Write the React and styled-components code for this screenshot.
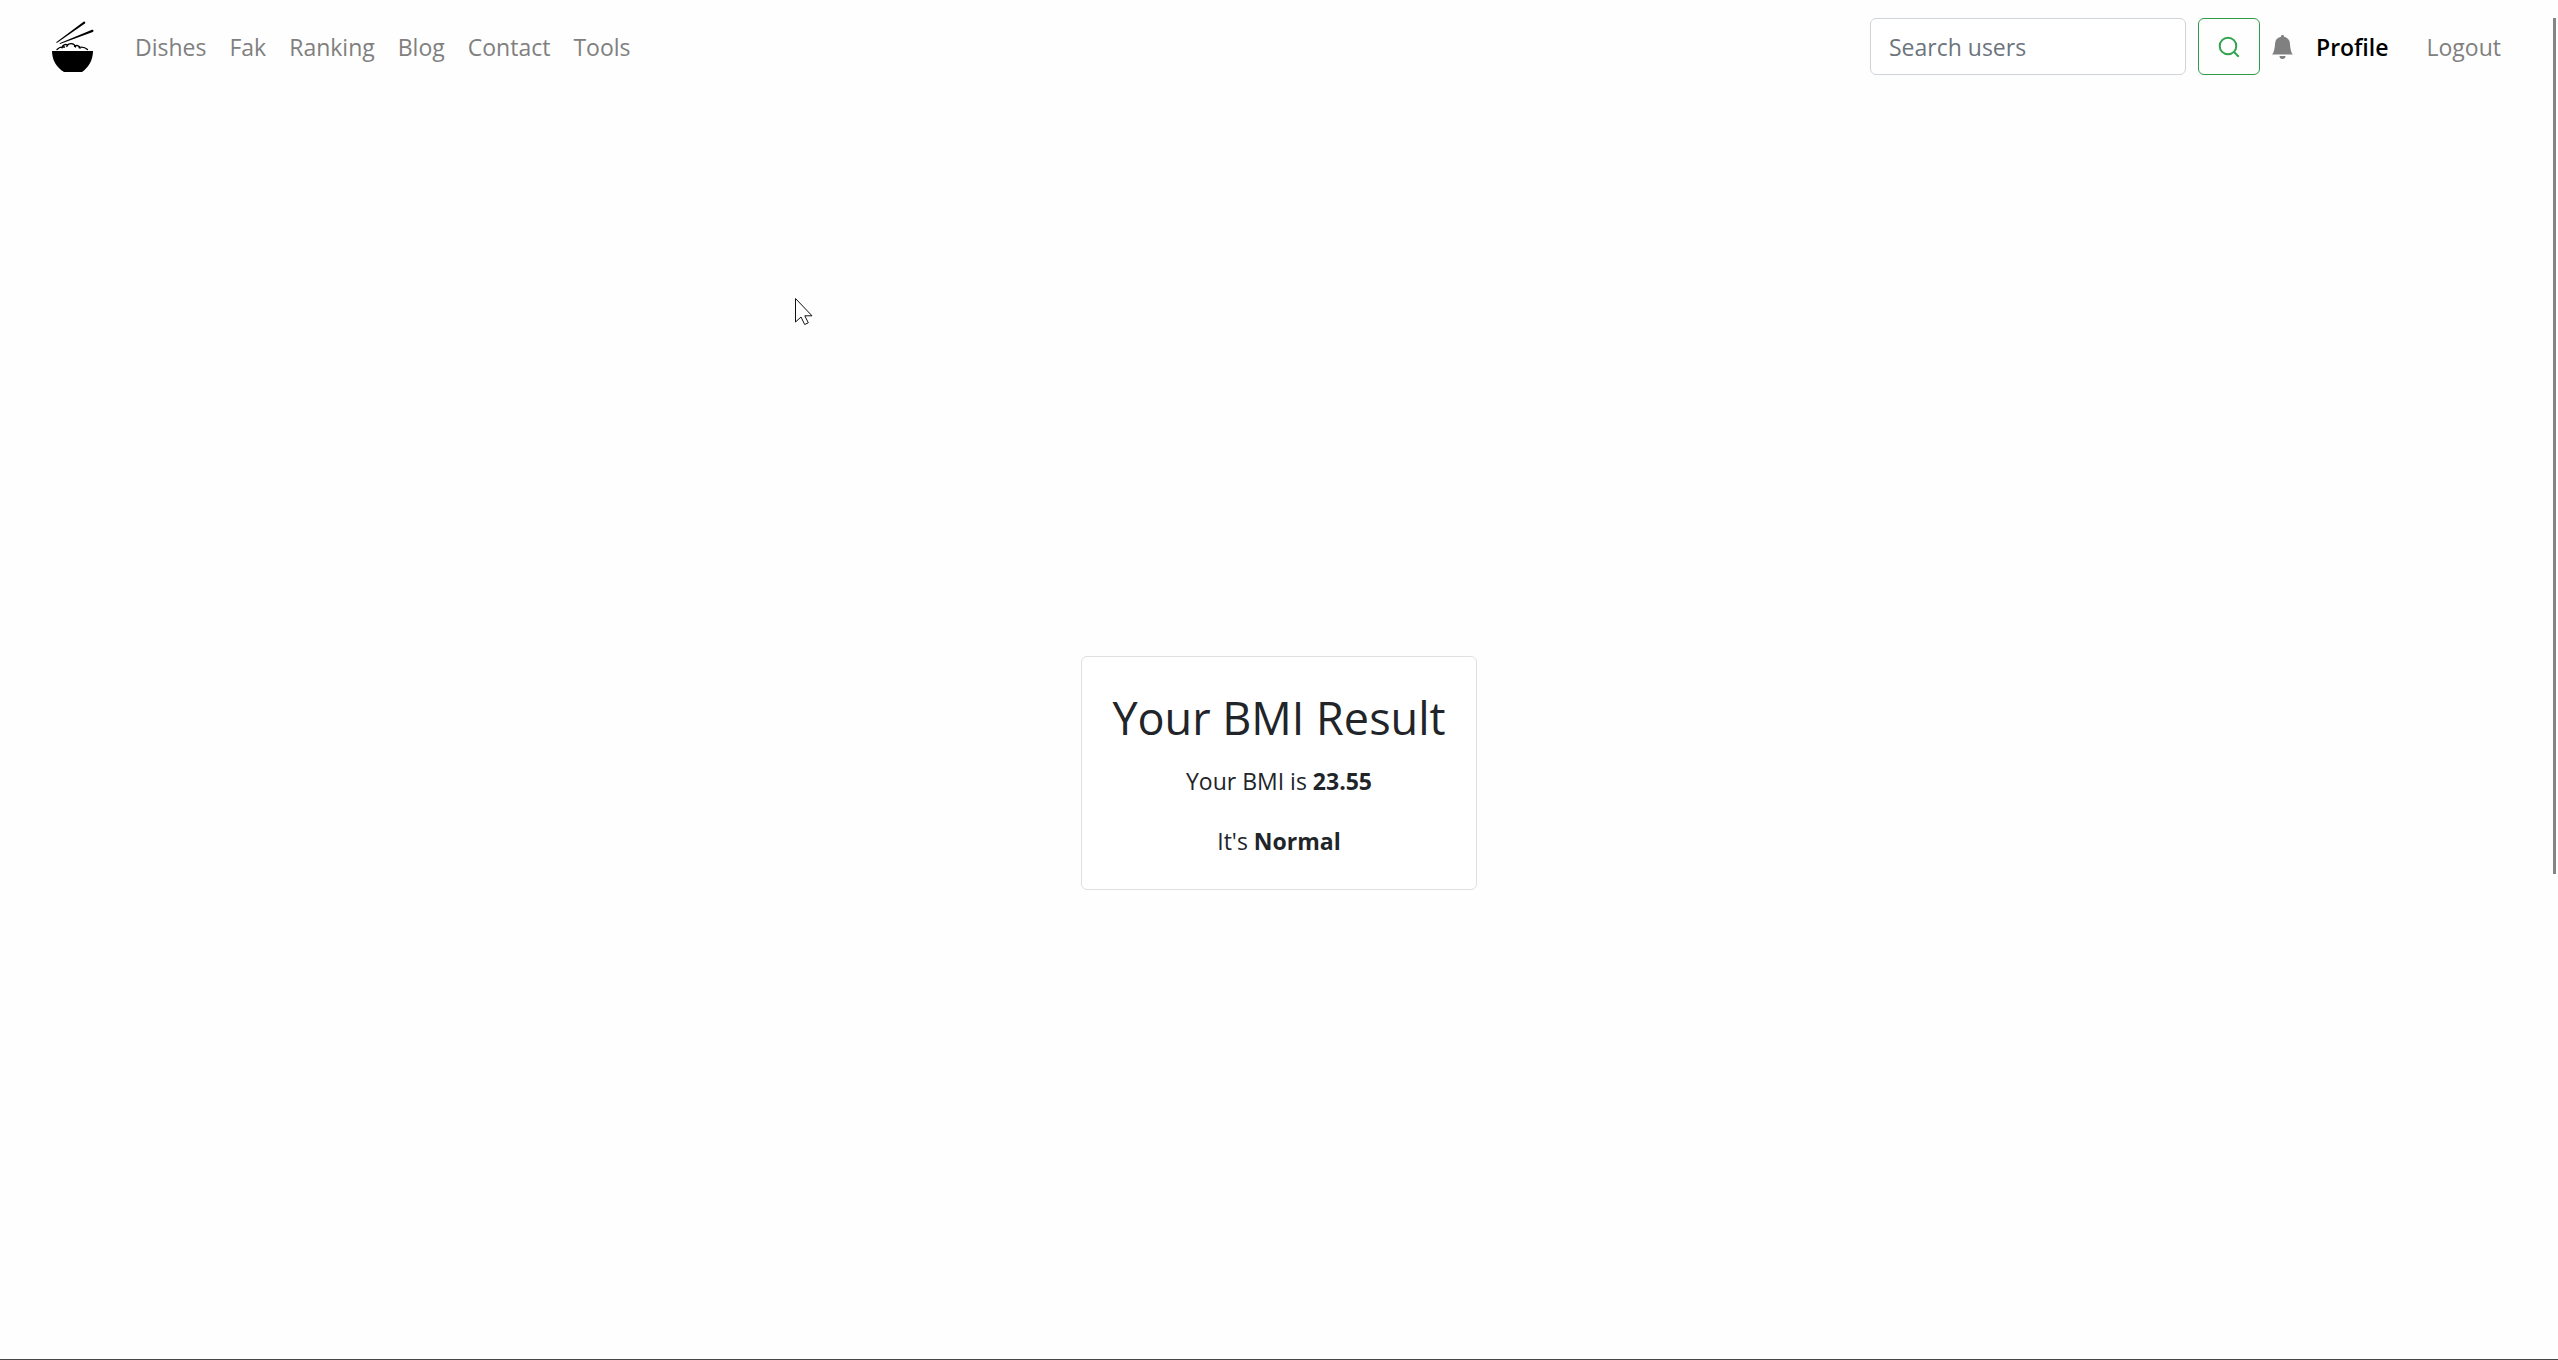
import React from 'react';
import styled, { createGlobalStyle } from 'styled-components';

const GlobalStyle = createGlobalStyle`
  *, *::before, *::after { box-sizing: border-box; }
  body {
    margin: 0;
    background: #fefefe;
    color: #212529;
    font-family: "Open Sans", "Noto Sans", sans-serif;
    font-size: 23px;
    line-height: 36px;
  }
`;

const Page = styled.div`
  position: relative;
  height: 100vh;
  overflow: hidden;
  display: flex;
  flex-direction: column;
  border-bottom: 1px solid #4a464a;
`;

const Navbar = styled.header`
  flex: none;
  display: flex;
  align-items: center;
  justify-content: space-between;
  padding: 18px 46px 18px 52px;
`;

const Brand = styled.a`
  display: flex;
  margin-right: 29px;
`;

const Nav = styled.nav`
  display: flex;
  align-items: center;
  gap: 1px;
`;

const NavLink = styled.a`
  padding: 0 11px;
  text-decoration: none;
  color: ${(p) => (p.$active ? '#000' : '#808080')};
  font-weight: ${(p) => (p.$active ? 600 : 400)};
`;

const Tools = styled.div`
  display: flex;
  align-items: center;
`;

const Search = styled.form`
  display: flex;
  gap: 12px;
`;

const SearchInput = styled.input`
  width: 316px;
  height: 57px;
  padding: 0 18px;
  border: 1px solid #ced4da;
  border-radius: 6px;
  background: #fff;
  color: #212529;
  font: inherit;
  &::placeholder { color: #6c757d; opacity: 1; }
`;

const SearchButton = styled.button`
  width: 62px;
  height: 57px;
  display: flex;
  align-items: center;
  justify-content: center;
  padding: 0;
  border: 1px solid #2f9a4c;
  border-radius: 6px;
  background: transparent;
  color: #34a350;
`;

const BellButton = styled.button`
  display: flex;
  margin: 0 12px;
  padding: 0;
  border: 0;
  background: transparent;
  color: #808080;
`;

const Account = styled.nav`
  display: flex;
  gap: 16px;
`;

const Main = styled.main`
  flex: 0 0 100vh;
  display: flex;
  align-items: center;
  justify-content: center;
`;

const Card = styled.section`
  min-width: 394px;
  padding: 32px 30px 30px;
  border: 1px solid #dfdfdf;
  border-radius: 6px;
  background: #fff;
  text-align: center;
`;

const Title = styled.h2`
  margin: 0 0 16px;
  font-size: 45px;
  font-weight: 400;
  line-height: 58px;
`;

const Line = styled.p`
  margin: 0;
  & + & { margin-top: 24px; }
`;

const ScrollThumb = styled.div`
  position: absolute;
  top: 18px;
  right: 2px;
  width: 3px;
  height: 63%;
  background: #858585;
`;

const Pointer = styled.svg`
  position: absolute;
  left: 794px;
  top: 297px;
`;

const links = ['Dishes', 'Fak', 'Ranking', 'Blog', 'Contact', 'Tools'];

function BowlLogo() {
  return (
    <svg width="42" height="51" viewBox="0 0 42 51" fill="none">
      <path d="M4.2 21.2 31.6.8c1-.7 2.3.7 1.300 1.600L4.800 21.900z" fill="#000" />
      <path d="M7.500 22.300 40 8.800c1.400-.5 2.200 1.500.8 2.100L8 22.900z" fill="#000" />
      <path
        d="M5 28.500c2.500-2.600 5-3 7.500-2.500M10 26.800c.5-3 3.500-4 5.500-2.800M14.800 25.500c1.500-3.800 7.500-3.800 8.700.5M22.500 25.300c3-1.800 5.300-.2 5.500 2M27 26.500c3.200-1 6.500.2 8.500 2"
        stroke="#000" strokeWidth="1.300" strokeLinecap="round"
      />
      <path d="M0 30h41c0 9-4.500 16.500-11 21H12C4.500 46.500 0 39 0 30z" fill="#000" />
    </svg>
  );
}

function SearchIcon() {
  return (
    <svg width="22" height="22" viewBox="0 0 22 22" fill="none" stroke="currentColor" strokeWidth="2">
      <circle cx="10" cy="10" r="8.300" />
      <path d="m15.800 15.800 4.900 4.900" />
    </svg>
  );
}

function BellIcon() {
  return (
    <svg width="21" height="24" viewBox="0 0 14 16" fill="currentColor">
      <path d="M7 16a2 2 0 0 0 2-2H5a2 2 0 0 0 2 2zm.995-14.901a1 1 0 1 0-1.990 0A5.002 5.002 0 0 0 2 6c0 1.098-.5 6-2 7h14c-1.500-1-2-5.902-2-7 0-2.420-1.720-4.440-4.005-4.901z" />
    </svg>
  );
}

export default function App() {
  return (
    <>
      <GlobalStyle />
      <Page>
        <Navbar>
          <Nav aria-label="Main">
            <Brand href="#" aria-label="Home"><BowlLogo /></Brand>
            {links.map((l) => <NavLink key={l} href="#">{l}</NavLink>)}
          </Nav>
          <Tools>
            <Search onSubmit={(e) => e.preventDefault()}>
              <SearchInput type="search" placeholder="Search users" aria-label="Search users" />
              <SearchButton type="submit" aria-label="Search"><SearchIcon /></SearchButton>
            </Search>
            <BellButton type="button" aria-label="Notifications"><BellIcon /></BellButton>
            <Account aria-label="Account">
              <NavLink href="#" $active>Profile</NavLink>
              <NavLink href="#">Logout</NavLink>
            </Account>
          </Tools>
        </Navbar>
        <Main>
          <Card>
            <Title>Your BMI Result</Title>
            <Line>Your BMI is <strong>23.55</strong></Line>
            <Line>It's <strong>Normal</strong></Line>
          </Card>
        </Main>
        <ScrollThumb />
        <Pointer width="20" height="30" viewBox="0 0 20 30" aria-hidden="true">
          <path d="M1.500 1.500v23.500l5.500-5 3.700 7.500 3.600-1.700-3.500-7H18z" fill="#fff" stroke="#111" strokeWidth="1" />
        </Pointer>
      </Page>
    </>
  );
}
